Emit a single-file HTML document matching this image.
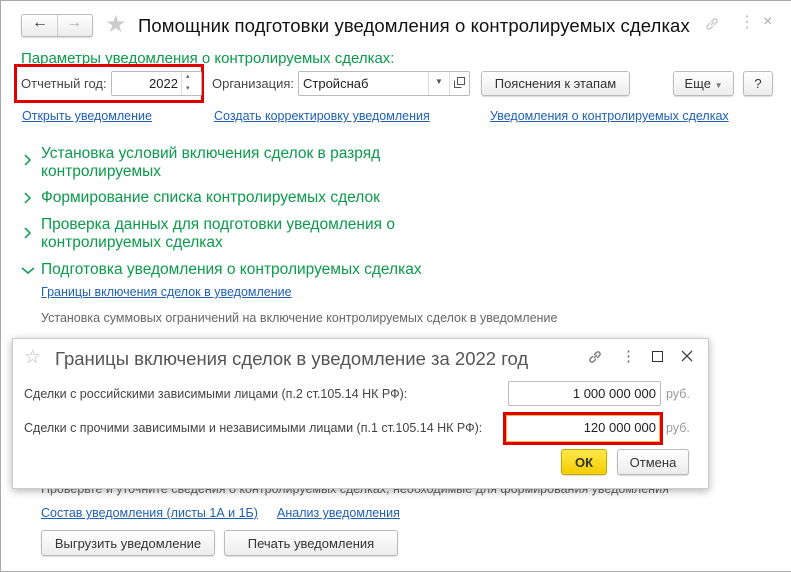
<!DOCTYPE html>
<html><head><meta charset="utf-8"><style>
*{box-sizing:border-box;margin:0;padding:0}
body{width:791px;height:572px;background:#fff;font-family:"Liberation Sans",sans-serif;position:relative;overflow:hidden;color:#333}
.frame{position:absolute;left:0;top:0;width:791px;height:572px;border:1px solid #aaa;border-right:none}
.a{position:absolute;white-space:nowrap}
.btn{position:absolute;border:1px solid #bbb;border-radius:3px;background:linear-gradient(#fff,#ececec);font-size:13px;color:#333;text-align:center;box-shadow:0 1px 1px rgba(0,0,0,.15)}
.inp{position:absolute;border:1px solid #bbb;border-radius:2px;background:#fff;font-size:13px}
.lnk{position:absolute;color:#1f5fb4;text-decoration:underline;font-size:12.5px;white-space:nowrap}
.g{position:absolute;color:#0a9a4a;font-size:15.5px;line-height:18px}
svg{position:absolute}
</style></head><body>
<div class="frame"></div>
<div class="btn" style="left:21px;top:14px;width:72px;height:23px;border-radius:3px"></div>
<div class="a" style="left:57px;top:15px;width:1px;height:21px;background:#ccc"></div>
<div class="a" style="left:32px;top:14px;font-size:16px;color:#333">&#8592;</div>
<div class="a" style="left:66px;top:14px;font-size:16px;color:#aaa">&#8594;</div>
<div class="a" style="left:105px;top:10px;font-size:24px;color:#ccc">&#9733;</div>
<div class="a" style="left:138px;top:15px;font-size:18.5px;color:#111;letter-spacing:0.1px">Помощник подготовки уведомления о контролируемых сделках</div>
<svg style="left:704px;top:16px" width="16" height="16" viewBox="0 0 16 16" fill="none" stroke="#c8c8c8" stroke-width="1.4"><path d="M7 9l3-3M6 7L3.5 9.5a2.1 2.1 0 003 3L9 10M10 9l2.5-2.5a2.1 2.1 0 00-3-3L7 6"/></svg>
<div class="a" style="left:739px;top:12px;font-size:16px;color:#bbb">&#8942;</div>
<div class="a" style="left:763px;top:13px;font-size:16px;color:#aaa">&#215;</div>
<div class="a" style="left:21px;top:50px;font-size:15px;color:#0a9a4a">Параметры уведомления о контролируемых сделках:</div>
<div class="a" style="left:14px;top:64px;width:190px;height:39px;border:3px solid #e00000"></div>
<div class="a" style="left:21px;top:76px;font-size:13px;color:#444">Отчетный год:</div>
<div class="inp" style="left:111px;top:71px;width:91px;height:25px"></div>
<div class="a" style="left:149px;top:76px;font-size:13px;color:#222">2022</div>
<div class="a" style="left:181px;top:72px;width:1px;height:23px;background:#ddd"></div>
<div class="a" style="left:186px;top:72px;font-size:7px;color:#666">&#9652;</div>
<div class="a" style="left:186px;top:84px;font-size:7px;color:#666">&#9662;</div>
<div class="a" style="left:212px;top:76px;font-size:13px;color:#444">Организация:</div>
<div class="inp" style="left:298px;top:71px;width:172px;height:25px"></div>
<div class="a" style="left:303px;top:76px;font-size:13px;color:#222">Стройснаб</div>
<div class="a" style="left:428px;top:72px;width:1px;height:23px;background:#ddd"></div>
<div class="a" style="left:449px;top:72px;width:1px;height:23px;background:#ddd"></div>
<div class="a" style="left:435px;top:77px;font-size:8px;color:#555">&#9660;</div>
<svg style="left:454px;top:77px" width="11" height="11" viewBox="0 0 11 11" fill="none" stroke="#555"><rect x="3.5" y="0.5" width="7" height="7"/><path d="M0.5 3.5v7h7"/></svg>
<div class="btn" style="left:481px;top:71px;width:149px;height:25px;line-height:23px">Пояснения к этапам</div>
<div class="btn" style="left:673px;top:71px;width:61px;height:25px;line-height:23px">Еще <span style="font-size:8px;color:#777">&#9660;</span></div>
<div class="btn" style="left:743px;top:71px;width:30px;height:25px;line-height:23px">?</div>
<div class="lnk" style="left:22px;top:109px">Открыть уведомление</div>
<div class="lnk" style="left:214px;top:109px">Создать корректировку уведомления</div>
<div class="lnk" style="left:490px;top:109px">Уведомления о контролируемых сделках</div>
<svg style="left:23px;top:154px" width="10" height="12" viewBox="0 0 10 12" fill="none" stroke="#0a9a4a" stroke-width="1.5"><path d="M2 1l5 5-5 5"/></svg>
<div class="g" style="left:41px;top:145px">Установка условий включения сделок в разряд<br>контролируемых</div>
<svg style="left:23px;top:192px" width="10" height="12" viewBox="0 0 10 12" fill="none" stroke="#0a9a4a" stroke-width="1.5"><path d="M2 1l5 5-5 5"/></svg>
<div class="g" style="left:41px;top:189px">Формирование списка контролируемых сделок</div>
<svg style="left:23px;top:227px" width="10" height="12" viewBox="0 0 10 12" fill="none" stroke="#0a9a4a" stroke-width="1.5"><path d="M2 1l5 5-5 5"/></svg>
<div class="g" style="left:41px;top:216px">Проверка данных для подготовки уведомления о<br>контролируемых сделках</div>
<svg style="left:21px;top:266px" width="14" height="10" viewBox="0 0 14 10" fill="none" stroke="#0a9a4a" stroke-width="1.5"><path d="M1 2l6 5 6-5"/></svg>
<div class="g" style="left:41px;top:261px">Подготовка уведомления о контролируемых сделках</div>
<div class="lnk" style="left:41px;top:285px">Границы включения сделок в уведомление</div>
<div class="a" style="left:41px;top:311px;font-size:12.5px;color:#666">Установка суммовых ограничений на включение контролируемых сделок в уведомление</div>
<div class="a" style="left:41px;top:482px;font-size:12.5px;color:#666">Проверьте и уточните сведения о контролируемых сделках, необходимые для формирования уведомления</div>
<div class="lnk" style="left:41px;top:506px">Состав уведомления (листы 1А и 1Б)</div>
<div class="lnk" style="left:277px;top:506px">Анализ уведомления</div>
<div class="btn" style="left:41px;top:530px;width:174px;height:26px;line-height:25px">Выгрузить уведомление</div>
<div class="btn" style="left:224px;top:530px;width:174px;height:26px;line-height:25px">Печать уведомления</div>
<div class="a" style="left:12px;top:338px;width:697px;height:151px;background:#fff;border:1px solid #ccc;box-shadow:0 2px 8px rgba(0,0,0,.3)"></div>
<div class="a" style="left:24px;top:346px;font-size:19px;color:#bbb">&#9734;</div>
<div class="a" style="left:55px;top:348px;font-size:18.5px;color:#555">Границы включения сделок в уведомление за 2022 год</div>
<svg style="left:587px;top:349px" width="16" height="16" viewBox="0 0 16 16" fill="none" stroke="#777" stroke-width="1.4"><path d="M7 9l3-3M6 7L3.5 9.5a2.1 2.1 0 003 3L9 10M10 9l2.5-2.5a2.1 2.1 0 00-3-3L7 6"/></svg>
<div class="a" style="left:621px;top:347px;font-size:15px;color:#666">&#8942;</div>
<div class="a" style="left:652px;top:351px;width:11px;height:11px;border:1.5px solid #333"></div>
<svg style="left:681px;top:350px" width="12" height="12" viewBox="0 0 12 12" stroke="#444" stroke-width="1.3"><path d="M1 1l10 10M11 1L1 11"/></svg>
<div class="a" style="left:24px;top:387px;font-size:12.5px;color:#444">Сделки с российскими зависимыми лицами (п.2 ст.105.14 НК РФ):</div>
<div class="inp" style="left:508px;top:381px;width:153px;height:25px"></div>
<div class="a" style="left:560px;top:386px;width:96px;text-align:right;font-size:13px;color:#222">1 000 000 000</div>
<div class="a" style="left:666px;top:387px;font-size:12.5px;color:#999">руб.</div>
<div class="a" style="left:24px;top:421px;font-size:12.5px;color:#444">Сделки с прочими зависимыми и независимыми лицами (п.1 ст.105.14 НК РФ):</div>
<div class="a" style="left:503px;top:412px;width:160px;height:33px;border:3px solid #e00000;background:#fff"></div>
<div class="a" style="left:506px;top:415px;width:154px;height:27px;border:1px solid #e8b84a"></div>
<div class="a" style="left:560px;top:420px;width:96px;text-align:right;font-size:13px;color:#222">120 000 000</div>
<div class="a" style="left:666px;top:421px;font-size:12.5px;color:#999">руб.</div>
<div class="btn" style="left:561px;top:449px;width:46px;height:26px;line-height:25px;background:linear-gradient(#ffe84a,#f2cd00);border-color:#c9a800;font-weight:bold">ОК</div>
<div class="btn" style="left:617px;top:449px;width:72px;height:26px;line-height:25px">Отмена</div>
</body></html>
